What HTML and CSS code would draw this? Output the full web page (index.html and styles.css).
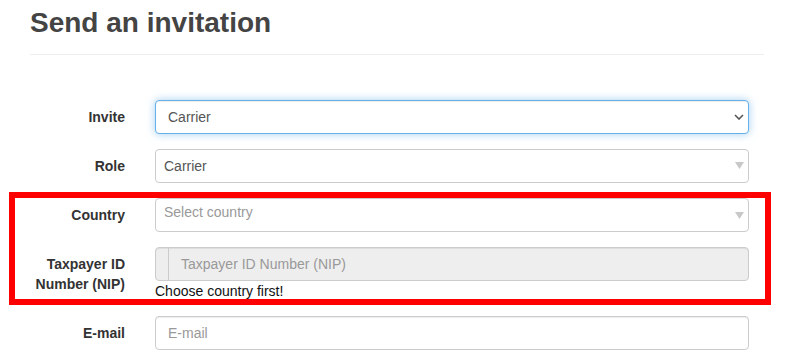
FILE: index.html
```html
<!DOCTYPE html>
<html lang="en">
<head>
<meta charset="utf-8">
<title>Send an invitation</title>
<link rel="stylesheet" href="styles.css">
</head>
<body>
<div class="page">
  <div class="page-header">
    <h2 class="title">Send an invitation</h2>
  </div>
  <form class="form">
    <div class="group">
      <label class="label">Invite</label>
      <div class="field">
        <div class="control select focus">
          <span class="value">Carrier</span>
          <svg class="chevron" width="10" height="6" viewBox="0 0 10 6"><path d="M1 1 L5 5 L9 1" fill="none" stroke="#555" stroke-width="1.6"/></svg>
        </div>
      </div>
    </div>
    <div class="group">
      <label class="label">Role</label>
      <div class="field">
        <div class="control select2">
          <span class="value">Carrier</span>
          <svg class="caret" width="9" height="7" viewBox="0 0 9 7"><path d="M0 0 H9 L4.5 7 Z" fill="#c8c8c8"/></svg>
        </div>
      </div>
    </div>
    <div class="group">
      <label class="label">Country</label>
      <div class="field">
        <div class="control select2 placeholder-top">
          <span class="placeholder">Select country</span>
          <svg class="caret" width="9" height="7" viewBox="0 0 9 7"><path d="M0 0 H9 L4.5 7 Z" fill="#c8c8c8"/></svg>
        </div>
      </div>
    </div>
    <div class="group">
      <label class="label">Taxpayer ID<br>Number (NIP)</label>
      <div class="field">
        <div class="control disabled">
          <span class="addon"></span>
          <span class="placeholder inset">Taxpayer ID Number (NIP)</span>
        </div>
        <div class="help">Choose country first!</div>
      </div>
    </div>
    <div class="group">
      <label class="label">E-mail</label>
      <div class="field">
        <div class="control input">
          <span class="placeholder">E-mail</span>
        </div>
      </div>
    </div>
  </form>
  <div class="highlight"></div>
</div>
</body>
</html>
```

FILE: styles.css
```css
* { box-sizing: border-box; }
html, body { margin: 0; padding: 0; background: #fff; }
body {
  font-family: "Liberation Sans", Arial, sans-serif;
  font-size: 14px;
  line-height: 20px;
  color: #333;
}
.page { position: relative; width: 793px; height: 362px; overflow: hidden; }
.page-header {
  margin: 8px 29px 0 30px;
  padding-bottom: 15px;
  border-bottom: 1px solid #eee;
}
.title {
  margin: 0;
  font-size: 28px;
  line-height: 30.8px;
  font-weight: bold;
  color: #444;
}
.form { margin: 45px 0 0 15px; width: 734px; }
.group {
  display: grid;
  grid-template-columns: 110px 594px;
  column-gap: 30px;
  margin-bottom: 15px;
}
.label {
  text-align: right;
  font-weight: bold;
  padding-top: 7px;
  color: #333;
}
.field { display: flex; flex-direction: column; }
.control {
  height: 34px;
  border: 1px solid #ccc;
  border-radius: 4px;
  display: flex;
  align-items: center;
  background: #fff;
  box-shadow: inset 0 1px 1px rgba(0,0,0,.075);
  color: #555;
  position: relative;
}
.select { padding: 0 12px; justify-content: space-between; }
.focus {
  border-color: #66afe9;
  box-shadow: inset 0 1px 1px rgba(0,0,0,.075), 0 0 8px rgba(102,175,233,.6);
}
.chevron { margin-right: -8px; }
.select2 { padding: 0 4px 0 8px; justify-content: space-between; box-shadow: none; }
.placeholder-top { align-items: flex-start; padding-top: 3px; }
.placeholder-top .caret { margin-top: 10px; }
.placeholder { color: #999; }
.disabled { background: #eee; }
.addon {
  width: 13px;
  align-self: stretch;
  border-right: 1px solid #ccc;
}
.inset { padding-left: 12px; }
.input { padding: 0 12px; }
.help { color: #111; line-height: 20px; }
.highlight {
  position: absolute;
  left: 9px;
  top: 192px;
  width: 762px;
  height: 113px;
  border: 6px solid #ff0000;
}
```
